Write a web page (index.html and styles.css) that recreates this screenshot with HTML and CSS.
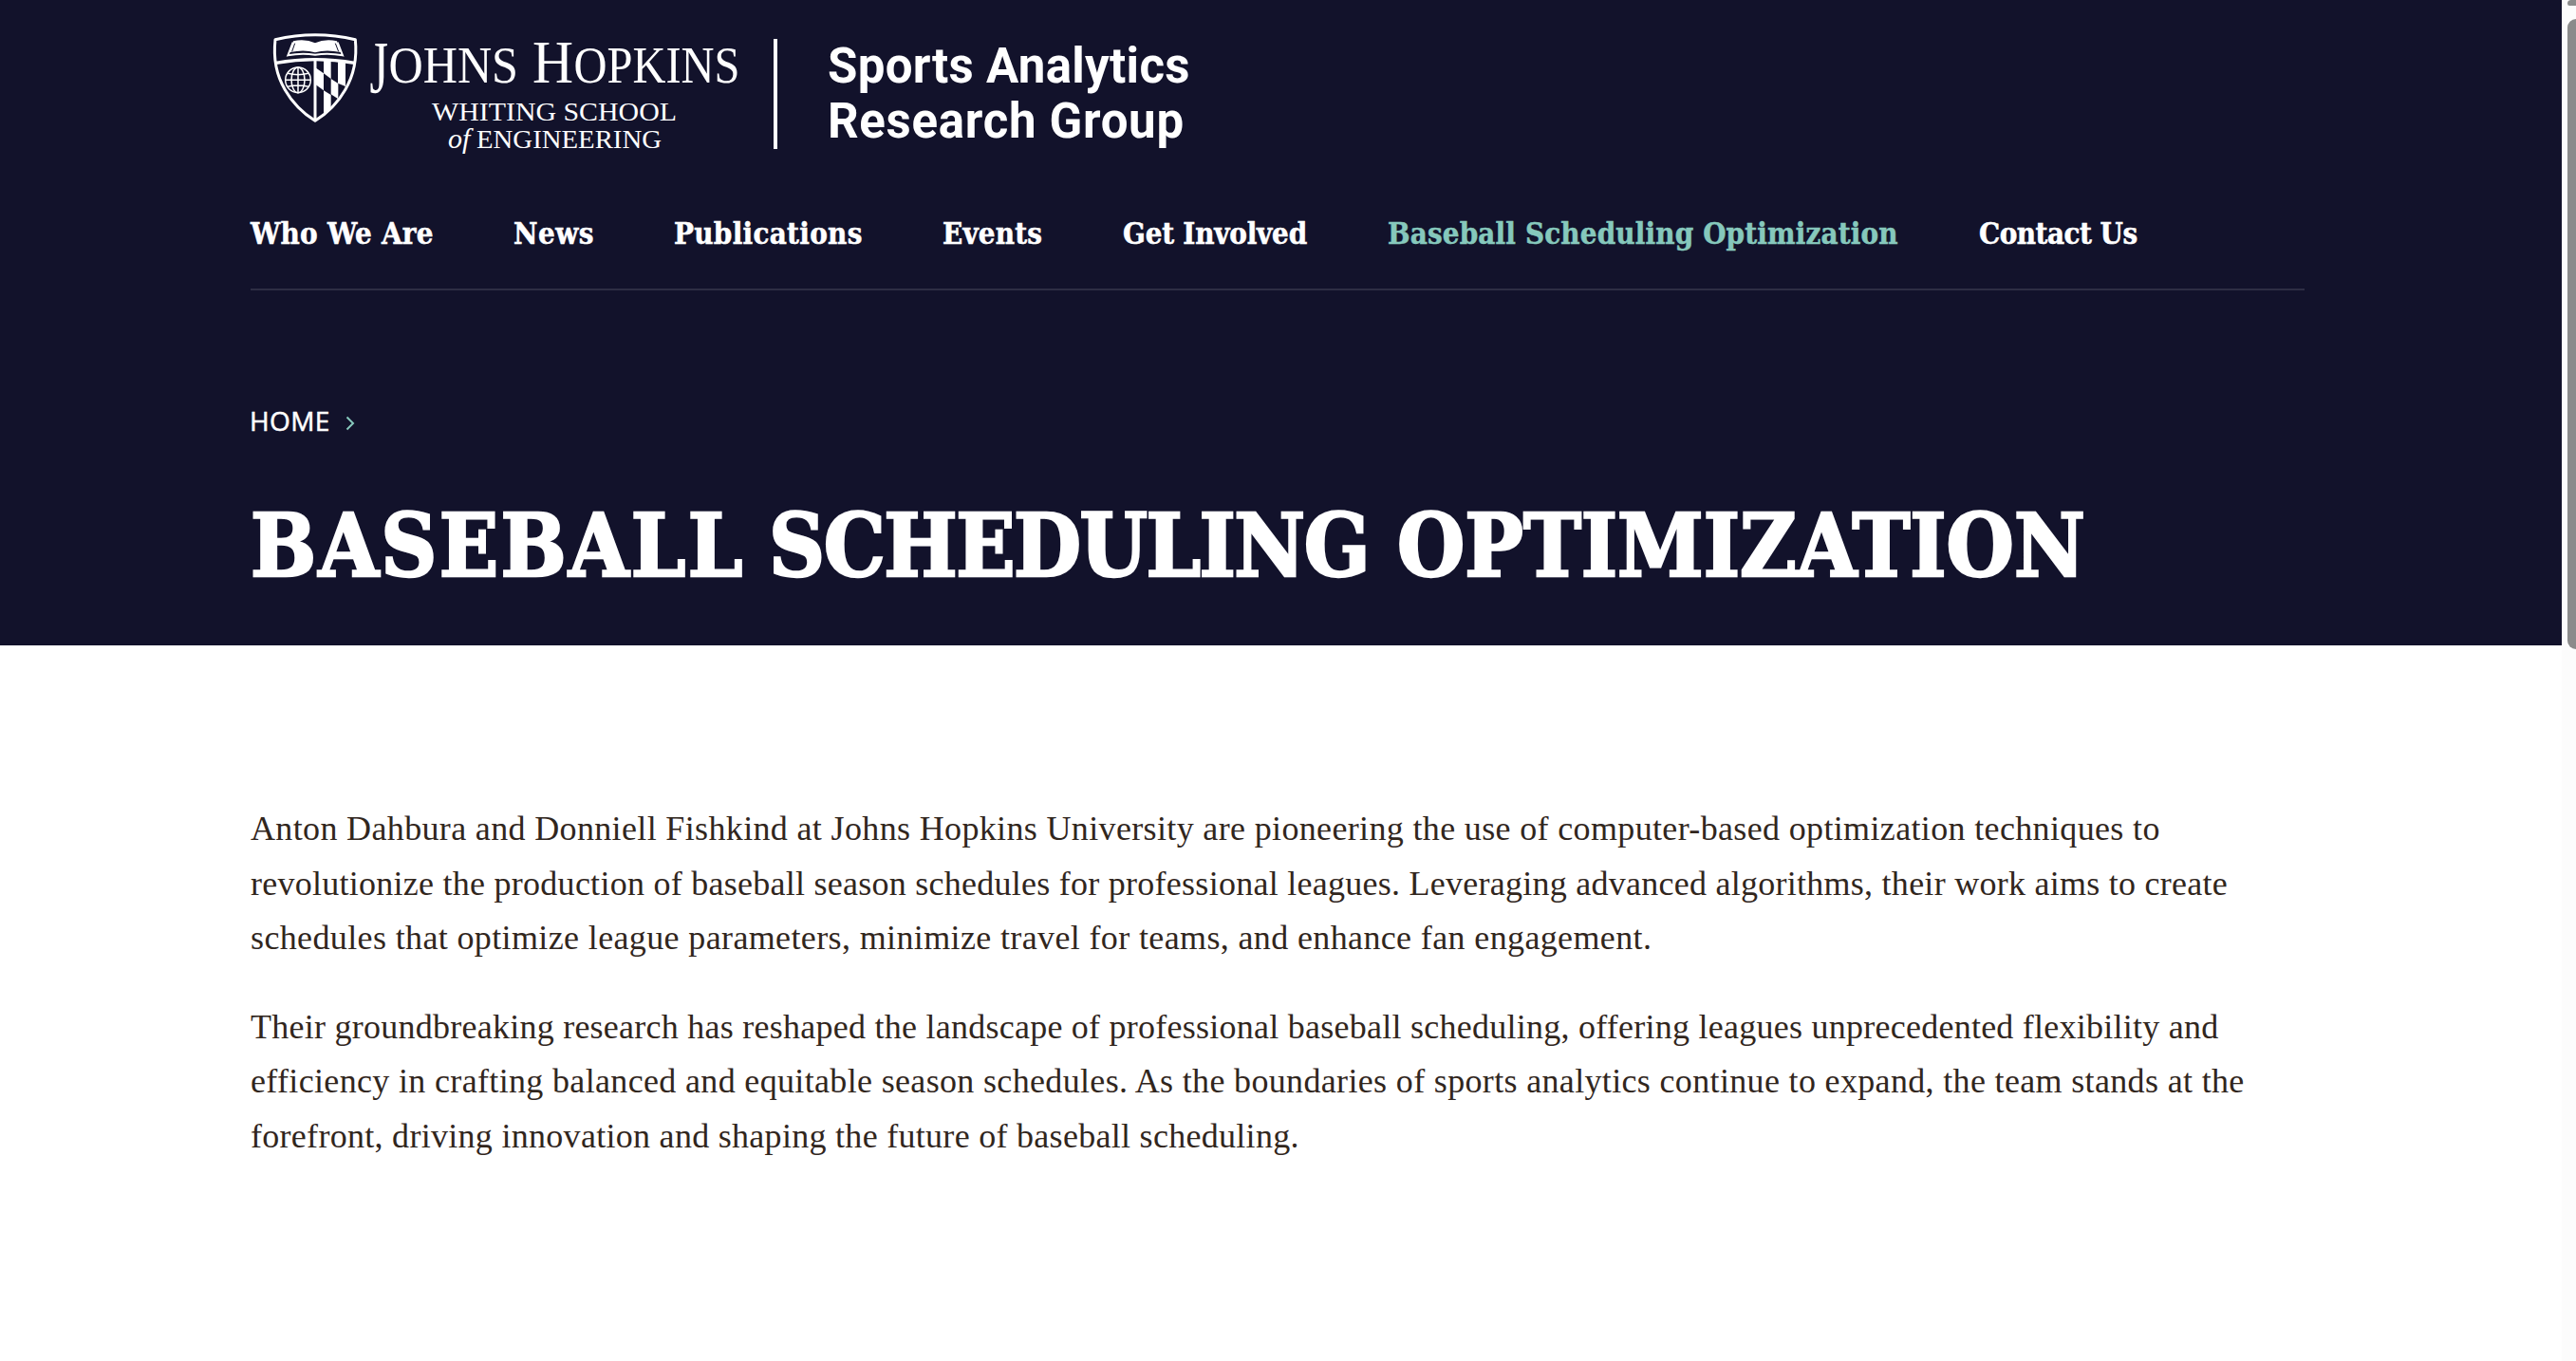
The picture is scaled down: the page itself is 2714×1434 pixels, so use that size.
FILE: index.html
```html
<!DOCTYPE html>
<html lang="en">
<head>
<meta charset="utf-8">
<title>Baseball Scheduling Optimization</title>
<link rel="stylesheet" href="styles.css">
</head>
<body>
<div class="page">
  <header class="hero">
    <div class="brand">
      <svg class="logo" viewBox="260 20 540 150" role="img" aria-label="Johns Hopkins Whiting School of Engineering">
        <g transform="translate(260 20) scale(.33333)" fill="none" stroke="#fff">
          <path d="M90 65Q216 36 343 65Q352 155 311 224Q278 282 216 322Q154 282 121 224Q80 155 90 65Z" stroke-width="9" stroke-linejoin="round"/>
          <path d="M92 139Q216 117 341 139" stroke-width="10"/>
          <path d="M216 126V320" stroke-width="9"/>
          <path d="M147 70Q185 62 216 76Q247 62 285 70L297 105Q250 95 216 106Q182 95 137 105Z" fill="#fff" stroke="none"/>
          <path d="M146 74L130 115Q172 106 216 113Q260 106 303 115L287 74" stroke-width="6"/>
          <path d="M152 77L143 103M280 77L290 103" stroke="#12122b" stroke-width="3"/>
          <g stroke-width="4.5">
            <circle cx="162" cy="193" r="40"/>
            <ellipse cx="162" cy="193" rx="21" ry="40"/>
            <path d="M162 153V233M122 193H202M129 172Q162 180 195 172M129 214Q162 206 195 214"/>
          </g>
          <g fill="#fff" stroke="none">
            <path d="M216 153L243 172V226L216 206Z"/>
            <path d="M243 130L266 133V189L243 172Z"/>
            <path d="M288 136L312 139V213L288 203Z"/>
            <path d="M266 189L289 204V253L266 238Z"/>
            <path d="M243 226L266 240V287L243 304Z"/>
          </g>
        </g>
        <g class="logo-text">
          <text transform="translate(389.500 96.500) scale(1 1.24)" font-size="63" textLength="19.500" lengthAdjust="spacingAndGlyphs">J</text>
          <text x="409.500" y="86.500" font-size="54" textLength="136.500" lengthAdjust="spacingAndGlyphs">OHNS</text>
          <text x="561" y="86.500" font-size="63" textLength="43" lengthAdjust="spacingAndGlyphs">H</text>
          <text x="604.500" y="86.500" font-size="54" textLength="175" lengthAdjust="spacingAndGlyphs">OPKINS</text>
          <text x="455" y="127" font-size="28" textLength="258" lengthAdjust="spacingAndGlyphs">WHITING SCHOOL</text>
          <text x="472" y="156" font-size="30" font-style="italic">of</text>
          <text x="502" y="156" font-size="28" textLength="195" lengthAdjust="spacingAndGlyphs">ENGINEERING</text>
        </g>
      </svg>
      <div class="group-name"><span class="gn1">Sports Analytics</span><span class="gn2">Research Group</span></div>
    </div>
    <nav class="nav">
      <a class="n1">Who We Are</a>
      <a class="n2">News</a>
      <a class="n3">Publications</a>
      <a class="n4">Events</a>
      <a class="n5">Get Involved</a>
      <a class="n6 active">Baseball Scheduling Optimization</a>
      <a class="n7">Contact Us</a>
    </nav>
    <div class="crumbs">
      <span>HOME</span>
      <svg class="chev" viewBox="0 0 10 16"><path d="M1.500 1.500L8 8L1.500 14.500" fill="none" stroke="#86c8bc" stroke-width="2"/></svg>
    </div>
    <h1 class="title"><span class="t1">BASEBALL</span> <span class="t2">SCHEDULING</span> <span class="t3">OPTIMIZATION</span></h1>
  </header>
  <main class="content">
    <p>
      <span class="a1">Anton Dahbura and Donniell Fishkind at Johns Hopkins University are pioneering the use of computer-based optimization techniques to</span>
      <span class="a2">revolutionize the production of baseball season schedules for professional leagues. Leveraging advanced algorithms, their work aims to create</span>
      <span class="a3">schedules that optimize league parameters, minimize travel for teams, and enhance fan engagement.</span>
    </p>
    <p>
      <span class="b1">Their groundbreaking research has reshaped the landscape of professional baseball scheduling, offering leagues unprecedented flexibility and</span>
      <span class="b2">efficiency in crafting balanced and equitable season schedules. As the boundaries of sports analytics continue to expand, the team stands at the</span>
      <span class="b3">forefront, driving innovation and shaping the future of baseball scheduling.</span>
    </p>
  </main>
</div>
<div class="scroll"><div class="up"></div><div class="thumb"></div></div>
</body>
</html>
```
FILE: styles.css
```css
* { box-sizing: border-box; }
html, body { height: 100%; }
body { margin: 0; display: flex; overflow: hidden; background: #fff; }
.page { flex: 1; min-width: 0; }
.hero { height: 680px; padding: 20px 271px 0 264px; background: #12122b; color: #fff; }

.brand { display: flex; align-items: flex-start; height: 150px; margin-left: -4px; }
.logo { width: 540px; height: 150px; flex: none; }
.logo-text { font-family: "Liberation Serif", serif; fill: #fff; }
.group-name {
  margin: 21px 0 0 15px; height: 116px; padding-left: 53px;
  border-left: 4px solid #fff;
  font: 700 51px/58px Roboto, sans-serif; white-space: nowrap;
}
.group-name span { display: block; }
.gn1 { letter-spacing: .3px; }
.gn2 { letter-spacing: .7px; }

.nav {
  display: flex; gap: 84px; height: 136px; padding-top: 56px;
  border-bottom: 2px solid #2d2d44;
  font: bold 31px/40px "DejaVu Serif Condensed", "DejaVu Serif", serif;
  -webkit-text-stroke: .5px;
  white-space: nowrap;
}
.nav a { flex: none; }
.nav .active { color: #86c8bc; }
.n1 { width: 193px; letter-spacing: .25px; }
.n2 { width: 85px; letter-spacing: .5px; }
.n3 { width: 199px; letter-spacing: .3px; }
.n4 { width: 106px; letter-spacing: .2px; }
.n5 { width: 195px; letter-spacing: -.2px; }
.n6 { width: 539px; letter-spacing: .15px; }
.n7 { letter-spacing: -.5px; }

.crumbs {
  display: flex; align-items: center; gap: 16px; height: 40px; margin: 117px 0 0 -1px;
  font: 28px/40px "Open Sans", sans-serif; letter-spacing: .4px;
  -webkit-text-stroke: .5px;
}
.chev { width: 10px; height: 16px; margin-top: 6px; }

.title {
  display: flex; gap: 24px; margin: 57px 0 0;
  font: bold 91px/110px "DejaVu Serif Condensed", "DejaVu Serif", serif;
  -webkit-text-stroke: 2.5px #fff;
  white-space: nowrap;
}
.t1 { width: 522px; letter-spacing: 2.3px; }
.t2 { width: 638px; letter-spacing: -1.5px; }
.t3 { letter-spacing: 0; }

.content { padding: 165px 264px 0; color: #31261d; font: 36px/57.6px "Liberation Serif", serif; }
.content p { margin: 0 0 36px; }
.content span { display: block; white-space: nowrap; }
.a1 { letter-spacing: .35px; }
.a2 { letter-spacing: .26px; }
.a3 { letter-spacing: .37px; }
.b1 { letter-spacing: .25px; }
.b2 { letter-spacing: .34px; }
.b3 { letter-spacing: .29px; }

.scroll { width: 15px; flex: none; padding-left: 6px; background: #fcfcfc; overflow: hidden; }
.up { height: 6px; width: 18px; background: #8b8b8b; border-radius: 5px 5px 3px 3px; }
.thumb { width: 18px; height: 664px; margin-top: 14px; border-radius: 9px; background: #8b8b8b; }
```
